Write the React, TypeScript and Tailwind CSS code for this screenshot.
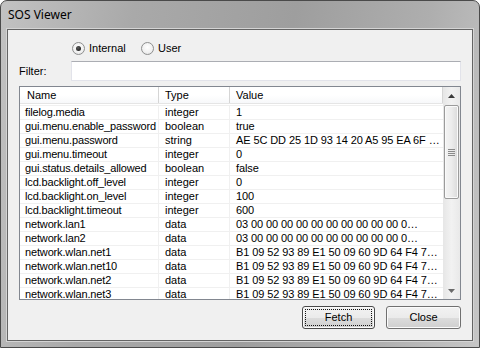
import React from "react";

const rows: [string, string, string][] = [
  ["filelog.media", "integer", "1"],
  ["gui.menu.enable_password", "boolean", "true"],
  ["gui.menu.password", "string", "AE 5C DD 25 1D 93 14 20 A5 95 EA 6F …"],
  ["gui.menu.timeout", "integer", "0"],
  ["gui.status.details_allowed", "boolean", "false"],
  ["lcd.backlight.off_level", "integer", "0"],
  ["lcd.backlight.on_level", "integer", "100"],
  ["lcd.backlight.timeout", "integer", "600"],
  ["network.lan1", "data", "03 00 00 00 00 00 00 00 00 00 00 0…"],
  ["network.lan2", "data", "03 00 00 00 00 00 00 00 00 00 00 0…"],
  ["network.wlan.net1", "data", "B1 09 52 93 89 E1 50 09 60 9D 64 F4 7…"],
  ["network.wlan.net10", "data", "B1 09 52 93 89 E1 50 09 60 9D 64 F4 7…"],
  ["network.wlan.net2", "data", "B1 09 52 93 89 E1 50 09 60 9D 64 F4 7…"],
  ["network.wlan.net3", "data", "B1 09 52 93 89 E1 50 09 60 9D 64 F4 7…"],
];

function Radio({ checked }: { checked: boolean }) {
  return (
    <div className="w-[13px] h-[13px] rounded-full border border-[#8e8f8f] bg-[radial-gradient(circle_at_50%_40%,#ffffff_0%,#f0f0f0_60%,#d8d8d8_100%)] flex items-center justify-center shrink-0">
      {checked && (
        <div className="w-[5px] h-[5px] rounded-full bg-[radial-gradient(circle_at_40%_35%,#5a5a5a_0%,#101010_100%)]" />
      )}
    </div>
  );
}

function Button({ label, def, w }: { label: string; def?: boolean; w: string }) {
  return (
    <div
      className={
        "h-[23px] rounded-[3px] border flex p-[2px] bg-[linear-gradient(to_bottom,#f2f2f2_0%,#ebebeb_50%,#dddddd_50%,#cfcfcf_100%)] shadow-[inset_0_0_0_1px_#fbfbfb] " +
        w +
        (def ? " border-[#4a4a4a]" : " border-[#707070]")
      }
    >
      <div
        className={
          "flex-1 flex items-center justify-center text-[11px] leading-[13px] text-black " +
          (def ? "border border-dotted border-[#111]" : "border border-transparent")
        }
      >
        {label}
      </div>
    </div>
  );
}

export default function App() {
  return (
    <div
      className="w-[480px] h-[348px] bg-white"
      style={{ fontFamily: '"Liberation Sans", Arial, sans-serif' }}
    >
      <div className="w-full h-full rounded-t-[7px] border border-[#4a4a4a] flex flex-col bg-[linear-gradient(100deg,#c2c2c2_0%,#a9a9a9_25%,#9e9e9e_55%,#aeaeae_80%,#c6c6c6_100%)]">
        <div
          className="h-[28px] shrink-0 flex items-center px-[7px] text-[12px] text-black"
          style={{ fontFamily: '"Noto Sans", "Open Sans", sans-serif' }}
        >
          SOS Viewer
        </div>
        <div className="mx-[6px] mb-[6px] flex-1 border border-[#646464] shadow-[0_0_0_1px_#d4d4d4] bg-[#f0f0f0] flex flex-col px-[11px] pt-[12px] pb-[11px] text-[11px] text-black">
          {/* radios */}
          <div className="h-[13px] flex items-center ml-[53px]">
            <div className="w-[69px] flex items-center gap-[4px]">
              <Radio checked />
              <span className="leading-[13px]">Internal</span>
            </div>
            <div className="flex items-center gap-[4px]">
              <Radio checked={false} />
              <span className="leading-[13px]">User</span>
            </div>
          </div>
          {/* filter */}
          <div className="mt-[6px] h-[20px] flex items-center">
            <div className="w-[52px] leading-[13px]">Filter:</div>
            <div className="flex-1 h-[20px] bg-white border border-[#e2e3ea] border-t-[#abadb3]" />
          </div>
          {/* list */}
          <div className="mt-[5px] h-[214px] border border-[#828790] bg-white flex overflow-hidden">
            <div className="flex-1 flex flex-col overflow-hidden">
              <div className="h-[17px] shrink-0 flex border-b border-[#e5e5e5] bg-[linear-gradient(to_bottom,#ffffff_0%,#ffffff_50%,#f7f8fa_100%)]">
                <div className="w-[139px] border-r border-[#d5d5d5] pl-[7px] flex items-center leading-[13px]">Name</div>
                <div className="w-[71px] border-r border-[#d5d5d5] pl-[6px] flex items-center leading-[13px]">Type</div>
                <div className="flex-1 border-r border-[#d5d5d5] pl-[6px] flex items-center leading-[13px]">Value</div>
              </div>
              <div className="h-[1px] shrink-0" />
              <div className="border-t border-[#f0f0f0]">
                {rows.map(([n, t, v]) => (
                  <div key={n} className="h-[14px] flex border-b border-[#f0f0f0] leading-[13px]">
                    <div className="w-[139px] shrink-0 border-r border-[#f0f0f0] pl-[5px] whitespace-nowrap overflow-hidden tracking-[-0.15px]">{n}</div>
                    <div className="w-[71px] shrink-0 border-r border-[#f0f0f0] pl-[6px] whitespace-nowrap overflow-hidden">{t}</div>
                    <div className="flex-1 pl-[6px] whitespace-nowrap tracking-[-0.1px]">{v}</div>
                  </div>
                ))}
              </div>
            </div>
            {/* scrollbar */}
            <div className="w-[17px] shrink-0 flex flex-col bg-[linear-gradient(to_right,#e6e6e6_0%,#f2f2f2_50%,#e9e9e9_100%)]">
              <div className="h-[17px] flex items-center justify-center">
                <svg width="7" height="4" viewBox="0 0 7 4">
                  <polygon points="3.5,0 7,4 0,4" fill="#3a3a3a" />
                </svg>
              </div>
              <div className="mt-[1px] mx-[1px] h-[94px] rounded-[2px] border border-[#9b9b9b] bg-[linear-gradient(to_right,#f4f4f4_0%,#ececec_50%,#dadada_100%)] shadow-[inset_0_0_0_1px_#fafafa] flex flex-col items-center justify-center gap-[1px]">
                <div className="w-[7px] h-[1px] bg-[#8a8a8a]" />
                <div className="w-[7px] h-[1px] bg-[#8a8a8a]" />
                <div className="w-[7px] h-[1px] bg-[#8a8a8a]" />
                <div className="w-[7px] h-[1px] bg-[#8a8a8a]" />
              </div>
              <div className="flex-1" />
              <div className="h-[17px] flex items-center justify-center">
                <svg width="7" height="4" viewBox="0 0 7 4">
                  <polygon points="0,0 7,0 3.5,4" fill="#6a6a6a" />
                </svg>
              </div>
            </div>
          </div>
          {/* buttons */}
          <div className="mt-[6px] flex justify-end gap-[11px]">
            <Button label="Fetch" def w="w-[73px]" />
            <Button label="Close" w="w-[75px]" />
          </div>
        </div>
      </div>
    </div>
  );
}
